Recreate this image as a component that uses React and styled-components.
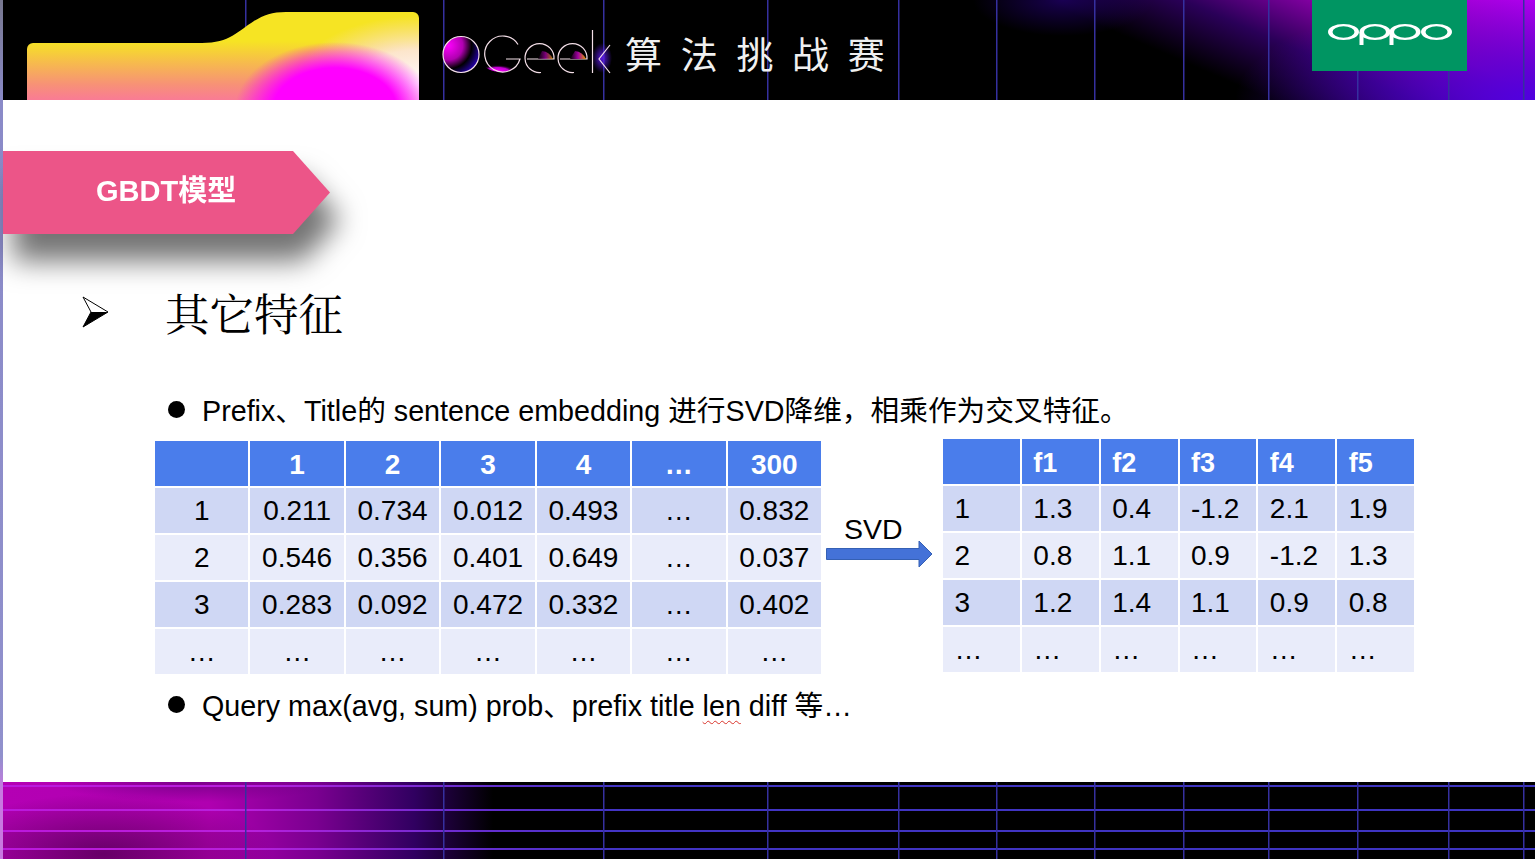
import styled, { createGlobalStyle } from "styled-components";

const GRID_X = [245, 443, 603, 767, 898, 996, 1094, 1183, 1268, 1357, 1448, 1523];
const SANS = `"Liberation Sans", "Noto Sans CJK SC", sans-serif`;

// thin blue lines of the banner grid, x is relative to the page strip
const gridImages = GRID_X.map(() => "linear-gradient(#35309f, #35309f)").join(", ");
const gridPositions = GRID_X.map((x) => `${x - 3}px 0`).join(", ");
const gridSizes = GRID_X.map(() => "1.5px 100%").join(", ");
const footerLine = "linear-gradient(90deg, #bb18dc 0, #b820dc 16%, #6a2cd0 30%, #4234c4 40%, #3d34c0 100%)";

const GlobalStyle = createGlobalStyle`
  html, body {
    margin: 0;
    padding: 0;
    background: #fff;
  }
  body {
    font-family: ${SANS};
    color: #000;
  }
`;

const Page = styled("div")`
  display: flex;
  flex-direction: column;
  width: 1535px;
  height: 859px;
  padding-left: 3px;
  box-sizing: border-box;
  overflow: hidden;
  background: linear-gradient(#77778f 0, #8a8ac8 12%, #9090cc 88%, #c878e0 92%);
`;

const Banner = styled("header")`
  display: flex;
  align-items: flex-end;
  flex: none;
  height: 100px;
  background-color: #000;
  background-image: ${gridImages},
    radial-gradient(ellipse 300px 110px at 100% 100%, #5000e0 0, rgba(80, 0, 224, 0) 100%),
    radial-gradient(ellipse 90px 36px at 1060px 0, rgba(30, 0, 100, 0.8) 0, rgba(30, 0, 100, 0) 100%),
    linear-gradient(23.5deg, #000 72%, #2a0058 80%, #8a00a8 88%, #b800f0 100%);
  background-repeat: no-repeat;
  background-position: ${gridPositions}, 0 0, 0 0, 0 0;
  background-size: ${gridSizes}, 100% 100%, 100% 100%, 100% 100%;
`;

const Flag = styled("svg")`
  flex: none;
  display: block;
  margin-left: 24px;
`;

const Logo = styled("svg")`
  flex: none;
  display: block;
  margin: 0 0 26px 23px;
`;

const Title = styled("div")`
  flex: none;
  align-self: flex-end;
  margin: 0 0 25px 13px;
  font-family: "Noto Sans CJK SC", sans-serif;
  font-size: 37px;
  line-height: 44px;
  letter-spacing: 18.7px;
  white-space: nowrap;
  color: #f0f0f0;
`;

const Badge = styled("div")`
  display: flex;
  justify-content: center;
  align-items: flex-start;
  align-self: flex-start;
  flex: none;
  width: 155px;
  height: 71px;
  padding-top: 24px;
  box-sizing: border-box;
  margin-left: auto;
  margin-right: 68px;
  background: #009562;
`;

const Main = styled("main")`
  display: flex;
  flex-direction: column;
  flex: 1;
  background: #fff;
`;

const RibbonShadow = styled("div")`
  width: 327px;
  height: 83px;
  margin-top: 51px;
  filter: drop-shadow(10px 27px 14px rgba(0, 0, 0, 0.55));
`;

const Ribbon = styled("div")`
  display: flex;
  align-items: center;
  height: 100%;
  padding: 0 0 10px 93px;
  box-sizing: border-box;
  font-size: 29px;
  font-weight: 700;
  color: #fff;
  background: #ec5588;
  clip-path: polygon(0 0, 290px 0, 100% 50%, 290px 100%, 0 100%);
`;

const Heading = styled("div")`
  display: flex;
  align-items: center;
  height: 60px;
  margin-top: 48px;
  padding-left: 79px;
`;

const HeadingText = styled("h2")`
  margin: 0 0 0 56px;
  font-family: "Noto Serif CJK SC", "Liberation Serif", "Noto Sans CJK SC", serif;
  font-size: 44.5px;
  font-weight: 400;
  line-height: 60px;
  white-space: nowrap;
`;

const Bullet = styled("p")`
  display: flex;
  align-items: center;
  height: 40px;
  margin: ${({ $top }) => $top}px 0 0 165px;
  font-size: 28.7px;
  white-space: nowrap;
  &::before {
    content: "";
    flex: none;
    position: relative;
    top: 1px;
    width: 17px;
    height: 17px;
    margin-right: 17px;
    border-radius: 50%;
    background: #000;
  }
`;

const Squiggle = styled("span")`
  text-decoration: underline wavy #d9342b 1px;
  text-underline-offset: 4px;
`;

const Tables = styled("div")`
  display: flex;
  align-items: flex-start;
  margin-top: 11px;
  padding-left: 152px;
`;

const Grid = styled("div")`
  display: grid;
  flex: none;
  grid-template-columns: repeat(${({ $cols }) => $cols}, 1fr);
  grid-auto-rows: 45px;
  gap: 2px;
  width: ${({ $width }) => $width}px;
  margin-top: ${({ $top }) => $top}px;
`;

const Cell = styled("div")`
  display: flex;
  align-items: center;
  justify-content: ${({ $left }) => ($left ? "flex-start" : "center")};
  padding-left: ${({ $left }) => ($left ? "11.5px" : "0")};
  padding-top: ${({ $row }) => ($row === 0 ? "3px" : "0")};
  box-sizing: border-box;
  font-size: ${({ $row, $left }) => ($row === 0 && $left ? "27px" : "28px")};
  font-weight: ${({ $row }) => ($row === 0 ? 700 : 400)};
  color: ${({ $row }) => ($row === 0 ? "#fff" : "#000")};
  background: ${({ $row }) =>
    $row === 0 ? "#4a7deb" : $row % 2 === 1 ? "#cfd7f4" : "#e9ecfa"};
`;

const Transform = styled("div")`
  display: flex;
  flex-direction: column;
  align-items: flex-start;
  flex: none;
  width: 122px;
  margin-top: 79px;
  padding-left: 5px;
  box-sizing: border-box;
`;

const TransformLabel = styled("span")`
  margin-left: 18px;
  font-size: 28.5px;
  line-height: 22px;
`;

const leftTable = [
  ["", "1", "2", "3", "4", "…", "300"],
  ["1", "0.211", "0.734", "0.012", "0.493", "…", "0.832"],
  ["2", "0.546", "0.356", "0.401", "0.649", "…", "0.037"],
  ["3", "0.283", "0.092", "0.472", "0.332", "…", "0.402"],
  ["…", "…", "…", "…", "…", "…", "…"],
];

const rightTable = [
  ["", "f1", "f2", "f3", "f4", "f5"],
  ["1", "1.3", "0.4", "-1.2", "2.1", "1.9"],
  ["2", "0.8", "1.1", "0.9", "-1.2", "1.3"],
  ["3", "1.2", "1.4", "1.1", "0.9", "0.8"],
  ["…", "…", "…", "…", "…", "…"],
];

const Footer = styled("footer")`
  flex: none;
  height: 77px;
  background-color: #000;
  background-image: ${gridImages},
    ${footerLine}, ${footerLine}, ${footerLine}, ${footerLine},
    radial-gradient(ellipse 170px 60px at 100px 72px, rgba(70, 0, 70, 0.7) 0, rgba(70, 0, 70, 0) 100%),
    radial-gradient(ellipse 140px 20px at 190px 0, rgba(110, 0, 130, 0.8) 0, rgba(110, 0, 130, 0) 100%),
    linear-gradient(90deg, #b400b4 0, #b000b0 42%, #7a0090 64%, #300060 84%, #000 100%);
  background-repeat: no-repeat;
  background-position: ${gridPositions}, 0 3px, 0 27px, 0 48px, 0 66px, 0 0, 0 0, 0 0;
  background-size: ${gridSizes}, 100% 2px, 100% 2px, 100% 2px, 100% 2px, 100% 100%, 100% 100%, 490px 100%;
`;

const FlagArt = () => (
  <Flag width="392" height="88" viewBox="0 0 392 88">
    <defs>
      <linearGradient id="flagBase" x1="0" y1="0.33" x2="0" y2="1">
        <stop offset="0" stopColor="#f6e423" />
        <stop offset="0.75" stopColor="#f79078" />
        <stop offset="1" stopColor="#f97b95" />
      </linearGradient>
      <radialGradient id="flagWhite" gradientUnits="userSpaceOnUse" cx="0" cy="0" r="1"
        gradientTransform="translate(392 72) scale(125 68)">
        <stop offset="0" stopColor="#ffffff" />
        <stop offset="0.5" stopColor="#fde8dc" stopOpacity="0.9" />
        <stop offset="1" stopColor="#fbd8c8" stopOpacity="0" />
      </radialGradient>
      <radialGradient id="flagPink" gradientUnits="userSpaceOnUse" cx="0" cy="0" r="1"
        gradientTransform="translate(308 98) scale(100 68)">
        <stop offset="0" stopColor="#ff00ff" />
        <stop offset="0.62" stopColor="#ff00ff" />
        <stop offset="1" stopColor="#ff00ff" stopOpacity="0" />
      </radialGradient>
      <clipPath id="flagClip">
        <path d="M0 88V37a6 6 0 0 1 6-6H175c28 0 36-12 52-22 10-6 18-9 32-9H386a6 6 0 0 1 6 6V88Z" />
      </clipPath>
    </defs>
    <g clipPath="url(#flagClip)">
      <rect width="392" height="88" fill="url(#flagBase)" />
      <rect width="392" height="88" fill="url(#flagWhite)" />
      <rect width="392" height="88" fill="url(#flagPink)" />
    </g>
  </Flag>
);

const LogoArt = () => (
  <Logo width="170" height="46" viewBox="0 0 170 46">
    <defs>
      <radialGradient id="logoDisc" cx="0.15" cy="0.25" r="0.95">
        <stop offset="0" stopColor="#ff00ff" />
        <stop offset="0.42" stopColor="#b000b0" />
        <stop offset="0.68" stopColor="#000" />
        <stop offset="1" stopColor="#2a00c0" />
      </radialGradient>
      <radialGradient id="logoG" cx="0.45" cy="0.95" r="0.5">
        <stop offset="0" stopColor="#ff00ff" />
        <stop offset="0.6" stopColor="#c000d0" />
        <stop offset="1" stopColor="#000" stopOpacity="0" />
      </radialGradient>
      <radialGradient id="logoK" cx="0.5" cy="0.5" r="0.5">
        <stop offset="0" stopColor="#5a18e0" />
        <stop offset="1" stopColor="#5a18e0" stopOpacity="0" />
      </radialGradient>
      <linearGradient id="logoE" x1="0" y1="0" x2="1" y2="0">
        <stop offset="0" stopColor="#000" />
        <stop offset="0.5" stopColor="#a000a0" />
        <stop offset="1" stopColor="#e0a000" />
      </linearGradient>
    </defs>
    <circle cx="19" cy="26.5" r="18" fill="url(#logoDisc)" stroke="#f4dfe8" strokeWidth="1.2" />
    <path d="M76 31 H62 c-5 6-18 8-23 3 2 5 10 10 21 10 9 0 15-6 16-13Z" fill="url(#logoG)" />
    <path d="M76 16.5A18 18 0 1 0 78 31H64" fill="none" stroke="#f4dfe8" strokeWidth="1.2" />
    <path d="M85 31H112A14.5 14.5 0 1 0 99 44.5" fill="none" stroke="#f4dfe8" strokeWidth="1.2" />
    <path d="M96 31 H111 A14 14 0 0 0 100 23Z" fill="url(#logoE)" opacity="0.75" />
    <path d="M118 31H145A14.5 14.5 0 1 0 132 44.5" fill="none" stroke="#f4dfe8" strokeWidth="1.2" />
    <path d="M128 31 H144 A14 14 0 0 0 133 23Z" fill="url(#logoE)" />
    <ellipse cx="160" cy="30" rx="10" ry="15" fill="url(#logoK)" />
    <path d="M150.5 2V45" fill="none" stroke="#f4dfe8" strokeWidth="1.2" />
    <path d="M168 17L157 31L168 45" fill="none" stroke="#f4dfe8" strokeWidth="1.2" />
  </Logo>
);

// one letter bowl of the wordmark: heavy sides, thin top and bottom
const bowl = (cx) =>
  `M${cx - 15.5} 8a15.5 8 0 1 0 31 0a15.5 8 0 1 0-31 0Z M${cx - 11} 8a11 5.8 0 1 1 22 0a11 5.8 0 1 1-22 0Z`;

const OppoMark = () => (
  <svg width="124" height="21" viewBox="0 0 124 21">
    <path d={bowl(15.5)} fill="#fff" fillRule="evenodd" />
    <path d={bowl(47)} fill="#fff" fillRule="evenodd" />
    <path d={bowl(77)} fill="#fff" fillRule="evenodd" />
    <path d={bowl(108.5)} fill="#fff" fillRule="evenodd" />
    <rect x="31.5" y="8" width="4" height="13" fill="#fff" />
    <rect x="61.5" y="8" width="4" height="13" fill="#fff" />
  </svg>
);

const ArrowBullet = () => (
  <svg width="27" height="32" viewBox="0 0 27 32">
    <path d="M1 1L26 16L1 31L9 16Z" fill="#fff" stroke="#000" strokeWidth="1" />
    <path d="M9 16H26L1 31Z" fill="#000" />
  </svg>
);

const BlueArrow = () => (
  <svg width="107" height="28" viewBox="0 0 107 28">
    <path d="M0.5 8.5H93V1L106 14L93 27V19.5H0.5Z" fill="#4472d8" stroke="#3560b4" strokeWidth="1" />
  </svg>
);

const DataGrid = ({ rows, width, top, left }) => (
  <Grid $cols={rows[0].length} $width={width} $top={top}>
    {rows.map((row, r) =>
      row.map((value, c) => (
        <Cell key={`${r}-${c}`} $row={r} $left={left}>
          {value}
        </Cell>
      ))
    )}
  </Grid>
);

const App = () => {
  return (
    <Page>
      <GlobalStyle />
      <Banner>
        <FlagArt />
        <LogoArt />
        <Title>算法挑战赛</Title>
        <Badge>
          <OppoMark />
        </Badge>
      </Banner>
      <Main>
        <RibbonShadow>
          <Ribbon>GBDT模型</Ribbon>
        </RibbonShadow>
        <Heading>
          <ArrowBullet />
          <HeadingText>其它特征</HeadingText>
        </Heading>
        <Bullet $top={46}>Prefix、Title的 sentence embedding 进行SVD降维，相乘作为交叉特征。</Bullet>
        <Tables>
          <DataGrid rows={leftTable} width={666} top={2} />
          <Transform>
            <TransformLabel>SVD</TransformLabel>
            <BlueArrow />
          </Transform>
          <DataGrid rows={rightTable} width={471} top={0} left />
        </Tables>
        <Bullet $top={9}>
          <span>
            Query max(avg, sum) prob、prefix title <Squiggle>len</Squiggle> diff 等…
          </span>
        </Bullet>
      </Main>
      <Footer />
    </Page>
  );
};

export default App;
